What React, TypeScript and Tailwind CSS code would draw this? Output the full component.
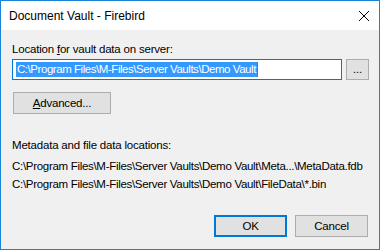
import React from "react";

const font = { fontFamily: '"Liberation Sans", Arial, sans-serif' };

export default function App() {
  return (
    <div
      className="w-[380px] h-[250px] border border-[#1883d7] flex flex-col bg-[#f0f0f0] text-[11.5px] tracking-[-0.2px] text-black leading-[16px] whitespace-nowrap"
      style={font}
    >
      <div className="h-[29px] bg-white flex items-center pl-[8px] pr-[9px]">
        <span className="flex-1 mt-[1px] text-[12px] tracking-normal">Document Vault - Firebird</span>
        <svg width="12" height="12" viewBox="0 0 12 12" className="mt-[1px]">
          <path d="M1 1 L11 11 M11 1 L1 11" stroke="#000" strokeWidth="1" />
        </svg>
      </div>
      <div className="flex-1 flex flex-col px-[11px] pt-[11px]">
        <div>
          Location <span className="underline">f</span>or vault data on server:
        </div>
        <div className="flex mt-[2px] gap-[4px]">
          <div className="flex-1 h-[21px] bg-white border border-[#0078d7] flex items-center pl-[3px]">
            <span className="bg-[#3399ff] text-white leading-[15px] px-[1px] tracking-[-0.45px]">
              C:\Program Files\M-Files\Server Vaults\Demo Vault
            </span>
            <span className="w-[1px] h-[15px] bg-[#c06010]" />
          </div>
          <div className="w-[23px] h-[21px] bg-[#e1e1e1] border border-[#adadad] flex items-center justify-center mr-[-1px]">
            <span className="leading-[12px] mb-[1px]">...</span>
          </div>
        </div>
        <div className="mt-[12px] w-[98px] h-[22px] ml-[1px] bg-[#e1e1e1] border border-[#adadad] flex items-center justify-center">
          <span>
            <span className="underline">A</span>dvanced...
          </span>
        </div>
        <div className="mt-[23px]">Metadata and file data locations:</div>
        <div className="mt-[4px] leading-[18px] tracking-[-0.3px]">
          C:\Program Files\M-Files\Server Vaults\Demo Vault\Meta...\MetaData.fdb
        </div>
        <div className="leading-[18px] tracking-[-0.3px]">
          C:\Program Files\M-Files\Server Vaults\Demo Vault\FileData\*.bin
        </div>
        <div className="flex justify-end gap-[8px] mt-[22px]">
          <div className="w-[73px] h-[22px] bg-[#e1e1e1] border-2 border-[#0078d7] flex items-center justify-center">
            OK
          </div>
          <div className="w-[73px] h-[22px] bg-[#e1e1e1] border border-[#adadad] flex items-center justify-center">
            Cancel
          </div>
        </div>
      </div>
    </div>
  );
}
